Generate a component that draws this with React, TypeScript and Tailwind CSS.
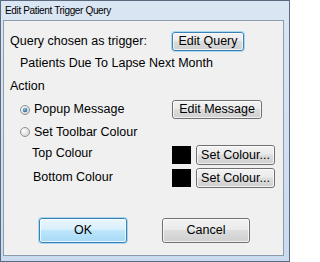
import React from 'react'

const font = { fontFamily: '"Liberation Sans", Arial, sans-serif' }

// Win7 style push button
const Btn = ({ label, w, h, kind = 'normal' }: { label: string; w: string; h: string; kind?: 'normal' | 'focus' | 'default' }) => {
  const outer =
    kind === 'normal'
      ? 'border-[#707070]'
      : 'border-[#3c7fb1] shadow-[0_0_0_1px_#a7d8f2]'
  const fill =
    kind === 'default'
      ? 'bg-[linear-gradient(#eaf6fd_0%,#d9f0fc_45%,#bee6fd_50%,#a7d9f5_100%)]'
      : 'bg-[linear-gradient(#f2f2f2_0%,#ebebeb_45%,#dddddd_50%,#cfcfcf_100%)]'
  return (
    <div className={`${w} ${h} shrink-0 rounded-[3px] border ${outer} ${fill} flex items-center justify-center`}>
      <div className="w-full h-full rounded-[2px] border border-white/70 flex items-center justify-center text-[12.5px] leading-none text-black">
        {label}
      </div>
    </div>
  )
}

const Radio = ({ checked }: { checked?: boolean }) => (
  <svg width="10" height="10" viewBox="0 0 10 10" className="shrink-0">
    <defs>
      <radialGradient id={checked ? 'rg1' : 'rg0'} cx="0.35" cy="0.35" r="0.7">
        <stop offset="0" stopColor="#ffffff" />
        <stop offset="1" stopColor="#d4d4d4" />
      </radialGradient>
      <radialGradient id="dot" cx="0.4" cy="0.35" r="0.7">
        <stop offset="0" stopColor="#8ad0f5" />
        <stop offset="1" stopColor="#1c4f86" />
      </radialGradient>
    </defs>
    <circle cx="5" cy="5" r="4.5" fill={`url(#${checked ? 'rg1' : 'rg0'})`} stroke="#8e8f8f" strokeWidth="1" />
    {checked && <circle cx="5" cy="5" r="2.2" fill="url(#dot)" />}
  </svg>
)

export default function App() {
  return (
    <div
      className="w-[290px] h-[262px] border border-[#5b6b7f] bg-[linear-gradient(#dae6f4,#c9dbef)] flex flex-col text-black"
      style={font}
    >
      {/* title bar */}
      <div className="h-[19px] pl-[4px] flex items-center text-[10px] tracking-[-0.35px] text-black">
        Edit Patient Trigger Query
      </div>

      {/* client area */}
      <div className="ml-[2px] mr-[5px] mb-[5px] flex-1 border border-[#8d9bad] bg-[#f0f0f0] flex flex-col text-[12.5px]">
        {/* query row */}
        <div className="mt-[11px] h-[19px] pl-[6px] flex items-center">
          <span className="w-[162px] shrink-0">Query chosen as trigger:</span>
          <Btn label="Edit Query" w="w-[72px]" h="h-[19px]" kind="focus" />
        </div>

        <div className="mt-[2px] h-[20px] pl-[16px] flex items-center">Patients Due To Lapse Next Month</div>

        <div className="mt-[3px] h-[20px] pl-[6px] flex items-center">Action</div>

        {/* popup message */}
        <div className="mt-[4px] h-[19px] pl-[16px] flex items-center">
          <Radio checked />
          <span className="ml-[4px] w-[138px] shrink-0">Popup Message</span>
          <Btn label="Edit Message" w="w-[90px]" h="h-[19px]" />
        </div>

        {/* toolbar colour */}
        <div className="mt-[3px] h-[20px] pl-[16px] flex items-center">
          <Radio />
          <span className="ml-[4px]">Set Toolbar Colour</span>
        </div>

        <div className="mt-[3px] h-[20px] pl-[28px] flex items-center">
          <span className="w-[140px] shrink-0 -mt-[3px]">Top Colour</span>
          <div className="w-[19px] h-[18px] bg-black shrink-0" />
          <div className="ml-[5px]">
            <Btn label="Set Colour..." w="w-[79px]" h="h-[20px]" />
          </div>
        </div>

        <div className="mt-[3px] h-[20px] pl-[29px] flex items-center">
          <span className="w-[139px] shrink-0 -mt-[2px]">Bottom Colour</span>
          <div className="w-[19px] h-[18px] bg-black shrink-0" />
          <div className="ml-[5px]">
            <Btn label="Set Colour..." w="w-[79px]" h="h-[20px]" />
          </div>
        </div>

        {/* dialog buttons */}
        <div className="mt-[30px] pl-[35px] flex items-center">
          <Btn label="OK" w="w-[88px]" h="h-[25px]" kind="default" />
          <div className="ml-[35px]">
            <Btn label="Cancel" w="w-[88px]" h="h-[25px]" />
          </div>
        </div>
      </div>
    </div>
  )
}
